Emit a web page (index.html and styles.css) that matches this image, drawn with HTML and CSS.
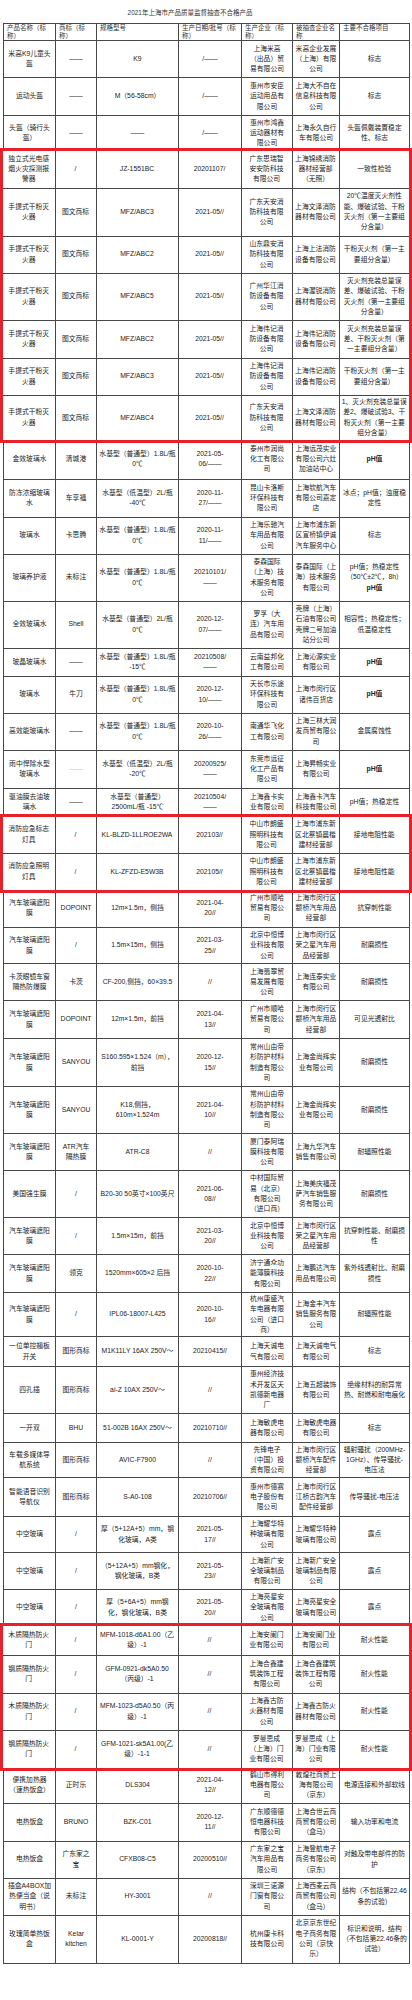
FILE: index.html
```html
<!DOCTYPE html>
<html lang="zh">
<head>
<meta charset="utf-8">
<title>2021年上海市产品质量监督抽查不合格产品</title>
<link rel="stylesheet" href="styles.css">
</head>
<body>
<div class="sheet">
  <div class="title">2021年上海市产品质量监督抽查不合格产品</div>

  <table class="grid">
    <colgroup><col class="c1"><col class="c2"><col class="c3"><col class="c4"><col class="c5"><col class="c6"><col class="c7"></colgroup>
    <tr class="hd"><th>产品名称（标<br>称）</th><th>商标（标<br>称）</th><th>规格型号</th><th>生产日期/批号（标<br>称）</th><th>生产企业（标<br>称）</th><th>被抽查企业名<br>称</th><th>主要不合格项目</th></tr>
    <tr class="h37"><td>米高K9儿童头盔</td><td>——</td><td>K9</td><td>/——</td><td>上海米高（出品）贸易有限公司</td><td>米高企业发展（上海）有限公司</td><td>标志</td></tr>
    <tr class="h38"><td>运动头盔</td><td>——</td><td>M（56-58cm）</td><td>/——</td><td>惠州市安臣运动用品有限公司</td><td>上海大不自在信息科技有限公司</td><td>标志</td></tr>
    <tr class="h35"><td>头盔（骑行头盔）</td><td>——</td><td>——</td><td>/——</td><td>惠州市鸿鑫运动器材有限公司</td><td>上海永久自行车有限公司</td><td>头盔佩戴装置稳定性、标志</td></tr>
  </table>

  <div class="mark">
  <table class="grid">
    <colgroup><col class="c1"><col class="c2"><col class="c3"><col class="c4"><col class="c5"><col class="c6"><col class="c7"></colgroup>
    <tr class="h37"><td>独立式光电感烟火灾探测报警器</td><td>/</td><td>JZ-1551BC</td><td>20201107/</td><td>广东思瑞智安安防科技有限公司</td><td>上海锦绣消防器材经营部<br>（无照）</td><td>一致性检验</td></tr>
    <tr class="h48"><td>手提式干粉灭火器</td><td>图文商标</td><td>MFZ/ABC3</td><td>2021-05//</td><td>广东天安消防科技有限公司</td><td>上海文泽消防器材有限公司</td><td>20℃温度灭火剂性能、爆破试验、干粉灭火剂（第一主要组分含量）</td></tr>
    <tr class="h37"><td>手提式干粉灭火器</td><td>图文商标</td><td>MFZ/ABC2</td><td>2021-05//</td><td>山东鼎安消防科技有限公司</td><td>上海上法消防设备有限公司</td><td>干粉灭火剂（第一主要组分含量）</td></tr>
    <tr class="h47"><td>手提式干粉灭火器</td><td>图文商标</td><td>MFZ/ABC5</td><td>2021-05//</td><td>广州华江消防设备有限公司</td><td>上海渥锐消防器材有限公司</td><td>灭火剂充装总量误差、爆破试验、干粉灭火剂（第一主要组分含量）</td></tr>
    <tr class="h38"><td>手提式干粉灭火器</td><td>图文商标</td><td>MFZ/ABC2</td><td>2021-05//</td><td>上海伟记消防设备有限公司</td><td>上海伟记消防设备有限公司</td><td>灭火剂充装总量误差、干粉灭火剂（第一主要组分含量）</td></tr>
    <tr class="h37"><td>手提式干粉灭火器</td><td>图文商标</td><td>MFZ/ABC3</td><td>2021-05//</td><td>上海伟记消防设备有限公司</td><td>上海伟记消防设备有限公司</td><td>干粉灭火剂（第一主要组分含量）</td></tr>
    <tr class="h45"><td>手提式干粉灭火器</td><td>图文商标</td><td>MFZ/ABC4</td><td>2021-05//</td><td>广东天安消防科技有限公司</td><td>上海文泽消防器材有限公司</td><td>1、灭火剂充装总量误差2、爆破试验3、干粉灭火剂（第一主要组分含量）</td></tr>
  </table>
  </div>

  <table class="grid">
    <colgroup><col class="c1"><col class="c2"><col class="c3"><col class="c4"><col class="c5"><col class="c6"><col class="c7"></colgroup>
    <tr class="h39"><td>金效玻璃水</td><td>清城港</td><td>水基型（普通型）1.8L/瓶<br>0℃</td><td>2021-05-<br>06/——</td><td>泰州市润尚化工有限公司</td><td>上海远茂实业有限公司六灶加油站中心</td><td><b>pH值</b></td></tr>
    <tr class="h38"><td>防冻浓缩玻璃水</td><td>车享福</td><td>水基型（低温型）2L/瓶<br>-40℃</td><td>2020-11-<br>27/——</td><td>昆山卡洛斯环保科技有限公司</td><td>上海钦航汽车有限公司嘉定店</td><td>冰点；pH值；浊度稳定性</td></tr>
    <tr class="h37"><td>玻璃水</td><td>卡思腾</td><td>水基型（普通型）1.8L/瓶<br>0℃</td><td>2020-11-<br>11/——</td><td>上海乐驰汽车用品有限公司</td><td>上海市浦东新区宣桥镇伊诚汽车服务中心</td><td>标志</td></tr>
    <tr class="h47"><td>玻璃养护液</td><td>未标注</td><td>水基型（普通型）1.8L/瓶<br>0℃</td><td>20210101/<br>——</td><td>泰森国际（上海）技术服务有限公司</td><td>泰森国际（上海）技术服务有限公司</td><td>pH值；热稳定性<br>（50℃±2℃，8h）<br><b>pH值</b></td></tr>
    <tr class="h47"><td>全效玻璃水</td><td>Shell</td><td>水基型（普通型）2L/瓶<br>0℃</td><td>2020-12-<br>07/——</td><td>罗孚（大连）汽车用品有限公司</td><td>壳牌（上海）石油有限公司壳牌二号加油站分公司</td><td>相容性；热稳定性；低温稳定性</td></tr>
    <tr class="h28"><td>玻晶玻璃水</td><td>——</td><td>水基型（普通型）1.8L/瓶<br>-15℃</td><td>20210508/<br>——</td><td>云南益邦化工有限公司</td><td>上海沁源实业有限公司</td><td><b>pH值</b></td></tr>
    <tr class="h37"><td>玻璃水</td><td>牛刀</td><td>水基型（普通型）1.8L/瓶<br>0℃</td><td>2020-12-<br>10/——</td><td>天长市乐途环保科技有限公司</td><td>上海市闵行区诸伟百货店</td><td><b>pH值</b></td></tr>
    <tr class="h37"><td>高效能玻璃水</td><td>——</td><td>水基型（普通型）1.8L/瓶<br>0℃</td><td>2020-10-<br>26/——</td><td>南通华飞化工有限公司</td><td>上海三林大润发商贸有限公司</td><td>金属腐蚀性</td></tr>
    <tr class="h38"><td>雨中悍除水型玻璃水</td><td class="dim">——</td><td>水基型（低温型）2L/瓶<br>-20℃</td><td>20200925/<br>——</td><td>东莞市远征化工产品有限公司</td><td>上海昇畅实业有限公司</td><td><b>pH值</b></td></tr>
    <tr class="h28"><td>驱油膜去油玻璃水</td><td>——</td><td>水基型（普通型）<br>2500mL/瓶 -15℃</td><td>20210504/<br>——</td><td>上海鑫卡实业有限公司</td><td>上海鑫卡汽车科技有限公司</td><td>pH值；热稳定性</td></tr>
  </table>

  <div class="mark">
  <table class="grid">
    <colgroup><col class="c1"><col class="c2"><col class="c3"><col class="c4"><col class="c5"><col class="c6"><col class="c7"></colgroup>
    <tr class="h37"><td>消防应急标志灯具</td><td>/</td><td>KL-BLZD-1LLROE2WA</td><td>202103//</td><td>中山市朗盛照明科技有限公司</td><td>上海市浦东新区北蔡镇晨楷建材经营部</td><td>接地电阻性能</td></tr>
    <tr class="h36"><td>消防应急照明灯具</td><td>/</td><td>KL-ZFZD-E5W3B</td><td>202105//</td><td>中山市朗盛照明科技有限公司</td><td>上海市浦东新区北蔡镇晨楷建材经营部</td><td>接地电阻性能</td></tr>
  </table>
  </div>

  <table class="grid">
    <colgroup><col class="c1"><col class="c2"><col class="c3"><col class="c4"><col class="c5"><col class="c6"><col class="c7"></colgroup>
    <tr class="h38"><td>汽车玻璃遮阳膜</td><td>DOPOINT</td><td>12m×1.5m，侧挡</td><td>2021-04-<br>20//</td><td>广州市顺哈贸易有限公司</td><td>上海市闵行区颛桥汽车用品经营部</td><td>抗穿刺性能</td></tr>
    <tr class="h36"><td>汽车玻璃遮阳膜</td><td>/</td><td>1.5m×15m，侧挡</td><td>2021-03-<br>25//</td><td>北京中恒博业科技有限公司</td><td>上海市闵行区荣之星汽车用品经营部</td><td>耐磨损性</td></tr>
    <tr class="h37"><td>卡茨眼镜车窗隔热防爆膜</td><td>卡茨</td><td>CF-200,侧挡，60×39.5</td><td>//</td><td>上海翡翠贸易发展有限公司</td><td>上海连泰实业有限公司</td><td>耐磨损性</td></tr>
    <tr class="h38"><td>汽车玻璃遮阳膜</td><td>DOPOINT</td><td>12m×1.5m，前挡</td><td>2021-04-<br>13//</td><td>广州市顺哈贸易有限公司</td><td>上海市闵行区颛桥汽车用品经营部</td><td>可见光透射比</td></tr>
    <tr class="h48"><td>汽车玻璃遮阳膜</td><td>SANYOU</td><td>S160.595×1.524（m），<br>前挡</td><td>2020-12-<br>15//</td><td>常州山由帝杉防护材料制造有限公司</td><td>上海金尚辉实业有限公司</td><td>耐磨损性</td></tr>
    <tr class="h47"><td>汽车玻璃遮阳膜</td><td>SANYOU</td><td>K18,侧挡，<br>610m×1.524m</td><td>2021-04-<br>10//</td><td>常州山由帝杉防护材料制造有限公司</td><td>上海金尚辉实业有限公司</td><td>耐磨损性</td></tr>
    <tr class="h37"><td>汽车玻璃遮阳膜</td><td>ATR汽车<br>隔热膜</td><td>ATR-C8</td><td>//</td><td>厦门泰阿瑞膜科技有限公司</td><td>上海九华汽车销售有限公司</td><td>耐辐照性能</td></tr>
    <tr class="h47"><td>美国强生膜</td><td>/</td><td>B20-30 50英寸×100英尺</td><td>2021-06-<br>08//</td><td>中材国际贸易（北京）有限公司（进口商）</td><td>上海美庆福茂萨汽车销售服务有限公司</td><td>耐磨损性</td></tr>
    <tr class="h37"><td>汽车玻璃遮阳膜</td><td>/</td><td>1.5m×15m，前挡</td><td>2021-03-<br>20//</td><td>北京中恒博业科技有限公司</td><td>上海市闵行区荣之星汽车用品经营部</td><td>抗穿刺性能、耐磨损性</td></tr>
    <tr class="h38"><td>汽车玻璃遮阳膜</td><td>领克</td><td>1520mm×605×2 后挡</td><td>2020-10-<br>22//</td><td>济宁通众功能薄膜科技有限公司</td><td>上海鹏达汽车用品有限公司</td><td>紫外线透射比、耐磨损性</td></tr>
    <tr class="h44"><td>汽车玻璃遮阳膜</td><td>/</td><td>IPL06-18007-L425</td><td>2020-10-<br>16//</td><td>杭州康盛汽车电器有限公司（进口商）</td><td>上海金丰汽车销售服务有限公司</td><td>耐辐照性能</td></tr>
    <tr class="h30"><td>一位单控翘板开关</td><td>图形商标</td><td>M1K11LY 16AX 250V～</td><td>20210415//</td><td>上海天诚电气有限公司</td><td>上海天诚电气有限公司</td><td>标志</td></tr>
    <tr class="h47"><td>四孔插</td><td>图形商标</td><td>ai-Z 10AX 250V～</td><td>//</td><td>惠州经济技术开发区天凯德新电器厂</td><td>上海五超装饰有限公司</td><td>绝缘材料的耐异常热、耐燃和耐电痕化</td></tr>
    <tr class="h29"><td>一开双</td><td>BHU</td><td>51-002B 16AX 250V～</td><td>20210710//</td><td>上海敏虎电器有限公司</td><td>上海敏虎电器有限公司</td><td>标志</td></tr>
    <tr class="h35"><td>车载多媒体导航系统</td><td>图形商标</td><td>AVIC-F7900</td><td>//</td><td>先锋电子（中国）投资有限公司</td><td>上海市闵行区颛桥汽车配件经营部</td><td>辐射骚扰（200MHz-<br>1GHz）、传导骚扰-<br>电压法</td></tr>
    <tr class="h39"><td>智能语音识别导航仪</td><td>图形商标</td><td>S-A0-108</td><td>20210706//</td><td>惠州市德赛电子股份有限公司</td><td>上海市闵行区江桥古韵汽车配件经营部</td><td>传导骚扰-电压法</td></tr>
    <tr class="h36"><td>中空玻璃</td><td>/</td><td>厚（5+12A+5）mm，钢<br>化玻璃，A类</td><td>2021-05-<br>17//</td><td>上海耀华特种玻璃有限公司</td><td>上海耀华特种玻璃有限公司</td><td>露点</td></tr>
    <tr class="h37"><td>中空玻璃</td><td>/</td><td>（5+12A+5）mm钢化，<br>钢化玻璃，B类</td><td>2021-05-<br>23//</td><td>上海新广安全玻璃制品有限公司</td><td>上海新广安全玻璃制品有限公司</td><td>露点</td></tr>
    <tr class="h36"><td>中空玻璃</td><td>/</td><td>厚（5+6A+5）mm钢<br>化，钢化玻璃，B类</td><td>2021-05-<br>20//</td><td>上海亮星安全玻璃有限公司</td><td>上海亮星安全玻璃有限公司</td><td>露点</td></tr>
  </table>

  <div class="mark">
  <table class="grid">
    <colgroup><col class="c1"><col class="c2"><col class="c3"><col class="c4"><col class="c5"><col class="c6"><col class="c7"></colgroup>
    <tr class="h29"><td>木质隔热防火门</td><td>/</td><td>MFM-1018-d6A1.00（乙<br>级）-1</td><td>//</td><td>上海安阑门业有限公司</td><td>上海安阑门业有限公司</td><td>耐火性能</td></tr>
    <tr class="h38"><td>钢质隔热防火门</td><td>/</td><td>GFM-0921-dk5A0.50<br>（丙级）-1</td><td>//</td><td>上海合鑫建筑装饰工程有限公司</td><td>上海合鑫建筑装饰工程有限公司</td><td>耐火性能</td></tr>
    <tr class="h37"><td>木质隔热防火门</td><td>/</td><td>MFM-1023-d5A0.50（丙<br>级）-1</td><td>//</td><td>上海鑫古防火器材有限公司</td><td>上海鑫古防火器材有限公司</td><td>耐火性能</td></tr>
    <tr class="h38"><td>钢质隔热防火门</td><td>/</td><td>GFM-1021-sk5A1.00(乙<br>级）-1-1</td><td>//</td><td>罗曼思成（上海）门业有限公司</td><td>罗曼思成（上海）门业有限公司</td><td>耐火性能</td></tr>
  </table>
  </div>

  <table class="grid">
    <colgroup><col class="c1"><col class="c2"><col class="c3"><col class="c4"><col class="c5"><col class="c6"><col class="c7"></colgroup>
    <tr class="h35"><td>便携加热器<br>（速热饭盒）</td><td>正时乐</td><td>DLS304</td><td>2021-04-<br>12//</td><td>鹤山市得利电器有限公司</td><td>敦煌社商贸上海有限公司<br>（京东）</td><td>电源连接和外部软线</td></tr>
    <tr class="h38"><td>电热饭盒</td><td>BRUNO</td><td>BZK-C01</td><td>2020-12-<br>11//</td><td>广东顺德德恒电器科技有限公司</td><td>上海合世云商商贸有限公司<br>（盒马）</td><td>输入功率和电流</td></tr>
    <tr class="h37"><td>电热饭盒</td><td>广东家之<br>宝</td><td>CFXB08-C5</td><td>20200510//</td><td>广东家之宝汽车用品有限公司</td><td>上海登航电子商务有限公司<br>（京东）</td><td>对触及带电部件的防护</td></tr>
    <tr class="h37"><td>插盒A4BOX加热便当盒（说明书）</td><td>未标注</td><td>HY-3001</td><td>//</td><td>深圳三诺源门窗有限公司</td><td>上海西麦云商商贸有限公司<br>（盒马）</td><td>结构（不包括第22.46<br>条的试验）</td></tr>
    <tr class="h48"><td>玫瑰简单热饭盒</td><td>Kelar<br>kitchen</td><td>KL-0001-Y</td><td>20200818//</td><td>杭州康卡科技有限公司</td><td>北京京东世纪电子商务有限公司（京快乐）</td><td>标识和说明，结构（不包括第22.46条的试验）</td></tr>
  </table>
</div>
</body>
</html>
```

FILE: styles.css
```css
html, body {
  margin: 0;
  padding: 0;
  background: #ffffff;
}

body {
  font-family: "Liberation Sans", "Noto Sans CJK SC", sans-serif;
  color: #222222;
}

.sheet {
  width: 406px;
  padding: 0 3px 40px 3px;
}

.title {
  height: 23px;
  box-sizing: border-box;
  padding-right: 32px;
  text-align: center;
  font-size: 6.5px;
  line-height: 25px;
  color: #333;
}

.grid {
  width: 406px;
  table-layout: fixed;
  border-collapse: collapse;
  font-size: 6.8px;
  line-height: 10.3px;
}

.grid .c1 { width: 52px; }
.grid .c2 { width: 41px; }
.grid .c3 { width: 82px; }
.grid .c4 { width: 63px; }
.grid .c5 { width: 51px; }
.grid .c6 { width: 47px; }
.grid .c7 { width: 70px; }

.grid th,
.grid td {
  border: 1px solid #474747;
  padding: 0 2px;
  text-align: center;
  vertical-align: middle;
  font-weight: normal;
  overflow: hidden;
}

.grid td:nth-child(5) {
  padding: 0 7px;
}

.grid .hd {
  height: 17px;
}

.grid .hd th {
  text-align: left;
  vertical-align: top;
  font-size: 6.5px;
  line-height: 7.9px;
  padding: 0 2px 0 3px;
  white-space: nowrap;
  color: #333;
}

.grid b {
  font-weight: bold;
}

.grid .dim {
  color: #c4c4c4;
}

.h28 { height: 28px; }
.h29 { height: 29px; }
.h30 { height: 30px; }
.h35 { height: 35px; }
.h36 { height: 36px; }
.h37 { height: 37px; }
.h38 { height: 38px; }
.h39 { height: 39px; }
.h44 { height: 44px; }
.h45 { height: 45px; }
.h47 { height: 47px; }
.h48 { height: 48px; }

.mark {
  position: relative;
  z-index: 1;
  border: 3px solid #e8202a;
  margin: -3px -3px;
}

.mark .grid {
  border-style: hidden;
}

.mark + .grid {
  border-top-style: hidden;
}
```
